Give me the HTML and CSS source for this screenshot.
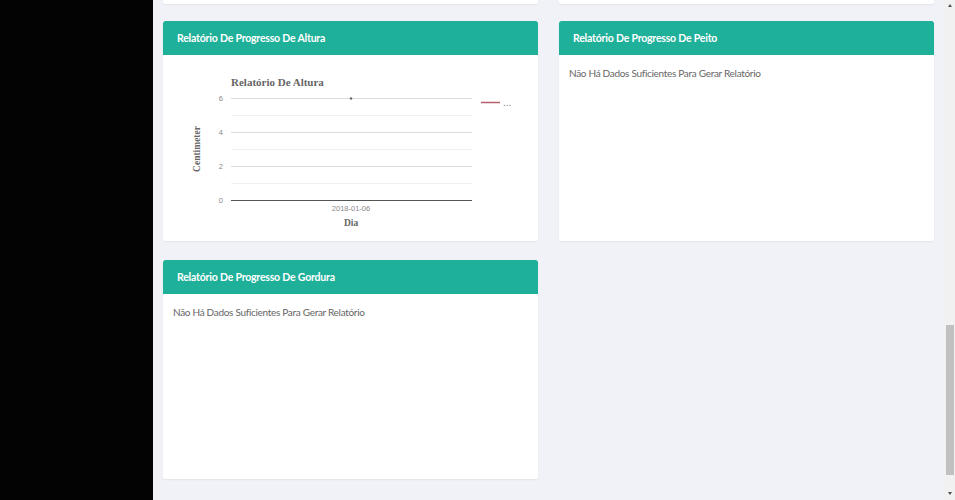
FILE: index.html
```html
<!DOCTYPE html>
<html lang="pt">
<head>
<meta charset="utf-8">
<title>Relatórios</title>
<link rel="stylesheet" href="styles.css">
</head>
<body>
<div class="app">
  <aside class="sidebar"></aside>
  <main class="main">
    <div class="grid">
      <div class="card stub"></div>
      <div class="card stub"></div>

      <section class="card">
        <header class="card-header">Relatório De Progresso De Altura</header>
        <div class="card-body chart-body">
          <svg class="chart" width="375" height="186" viewBox="0 0 375 186">
            <text class="c-title" x="68" y="31">Relatório De Altura</text>
            <line class="minor" x1="68" y1="60.5" x2="309" y2="60.5"/>
            <line class="minor" x1="68" y1="94.5" x2="309" y2="94.5"/>
            <line class="minor" x1="68" y1="128.5" x2="309" y2="128.5"/>
            <line class="major" x1="68" y1="43.5" x2="309" y2="43.5"/>
            <line class="major" x1="68" y1="77.5" x2="309" y2="77.5"/>
            <line class="major" x1="68" y1="111.5" x2="309" y2="111.5"/>
            <line class="axis" x1="68" y1="145.5" x2="309" y2="145.5"/>
            <text class="tick" x="60" y="46" text-anchor="end">6</text>
            <text class="tick" x="60" y="80" text-anchor="end">4</text>
            <text class="tick" x="60" y="114" text-anchor="end">2</text>
            <text class="tick" x="60" y="148" text-anchor="end">0</text>
            <circle class="pt" cx="188" cy="43.5" r="1.2"/>
            <text class="tick" x="188" y="156" text-anchor="middle">2018-01-06</text>
            <text class="axis-title" x="188" y="171" text-anchor="middle">Dia</text>
            <text class="axis-title" x="0" y="0" text-anchor="middle" transform="translate(37 94) rotate(-90)">Centimeter</text>
            <line class="legend" x1="318" y1="47.5" x2="337" y2="47.5"/>
            <text class="legend-txt" x="340" y="51">...</text>
          </svg>
        </div>
      </section>

      <section class="card">
        <header class="card-header">Relatório De Progresso De Peito</header>
        <div class="card-body">
          <p class="empty">Não Há Dados Suficientes Para Gerar Relatório</p>
        </div>
      </section>

      <section class="card tall">
        <header class="card-header">Relatório De Progresso De Gordura</header>
        <div class="card-body">
          <p class="empty">Não Há Dados Suficientes Para Gerar Relatório</p>
        </div>
      </section>
    </div>
  </main>
  <div class="scrollbar">
    <div class="arrow up"></div>
    <div class="track"><div class="thumb"></div></div>
    <div class="arrow down"></div>
  </div>
</div>
</body>
</html>
```

FILE: styles.css
```css
html, body {
  margin: 0;
  padding: 0;
  height: 100%;
  overflow: hidden;
}
body {
  font-family: "Lato", "Liberation Sans", sans-serif;
  background: #f1f2f7;
}
.app {
  display: flex;
  height: 500px;
}
.sidebar {
  width: 153px;
  flex: none;
  background: #030303;
}
.main {
  flex: 1;
  background: #f1f2f7;
  padding: 0 11px 0 10px;
}
.grid {
  display: grid;
  grid-template-columns: 375px 375px;
  grid-template-rows: 4px 220px 221px;
  column-gap: 21px;
  row-gap: 17px;
}
.card {
  background: #fff;
  border-radius: 2px;
  box-shadow: 0 1px 2px rgba(0, 0, 0, 0.06);
  display: flex;
  flex-direction: column;
  overflow: hidden;
}
.card.tall {
  margin-top: 2px;
}
.stub {
  border-radius: 0 0 2px 2px;
}
.card-header {
  height: 34px;
  flex: none;
  background: #1fb09a;
  color: #fff;
  font-weight: 700;
  font-size: 10.5px;
  letter-spacing: -0.2px;
  line-height: 34px;
  padding-left: 14px;
  border-radius: 2px 2px 0 0;
}
.card-body {
  flex: 1;
  padding: 11px 10px;
}
.chart-body {
  padding: 0;
}
.chart {
  display: block;
}
.empty {
  margin: 0;
  font-size: 10px;
  letter-spacing: -0.3px;
  color: #666;
  line-height: 14px;
}
.c-title {
  font-family: "Liberation Serif", serif;
  font-weight: 700;
  font-size: 11px;
  fill: #666;
}
.axis-title {
  font-family: "Liberation Serif", serif;
  font-weight: 700;
  font-size: 9.5px;
  fill: #666;
}
.tick {
  font-family: "Liberation Sans", sans-serif;
  font-size: 7.5px;
  fill: #888;
}
.major {
  stroke: #dcdcdc;
  stroke-width: 1;
}
.minor {
  stroke: #f0f0f0;
  stroke-width: 1;
}
.axis {
  stroke: #555;
  stroke-width: 1.2;
}
.pt {
  fill: #666;
}
.legend {
  stroke: #b8606e;
  stroke-width: 1.5;
}
.legend-txt {
  font-family: "Liberation Sans", sans-serif;
  font-size: 10px;
  fill: #777;
}
.scrollbar {
  width: 10px;
  flex: none;
  background: #f1f1f1;
  display: flex;
  flex-direction: column;
  align-items: center;
}
.arrow {
  width: 0;
  height: 0;
  border-left: 2.5px solid transparent;
  border-right: 2.5px solid transparent;
  flex: none;
}
.arrow.up {
  border-bottom: 3px solid #505050;
  margin: 4px 0 3px;
}
.arrow.down {
  border-top: 3px solid #505050;
  margin: 3px 0 5px;
}
.track {
  flex: 1;
  width: 100%;
  display: flex;
  flex-direction: column;
  justify-content: flex-end;
  align-items: center;
  padding-bottom: 14px;
}
.thumb {
  width: 8px;
  height: 150px;
  background: #c1c1c1;
}
```
